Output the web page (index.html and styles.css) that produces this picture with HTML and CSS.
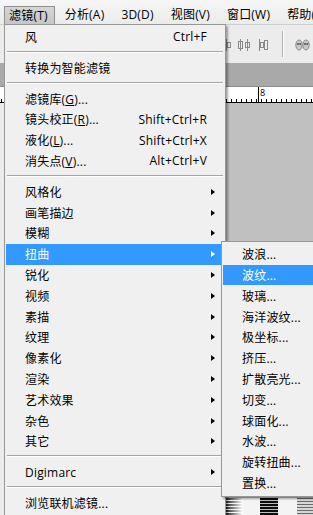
FILE: index.html
```html
<!DOCTYPE html>
<html lang="zh-CN">
<head>
<meta charset="utf-8">
<title>滤镜</title>
<link rel="stylesheet" href="styles.css">
</head>
<body>
<div class="app">
  <div class="menubar">
    <div class="mb-item open">滤镜(T)</div>
    <div class="mb-item">分析(A)</div>
    <div class="mb-item">3D(D)</div>
    <div class="mb-item">视图(V)</div>
    <div class="mb-item">窗口(W)</div>
    <div class="mb-item">帮助(H)</div>
  </div>
  <div class="optbar">
    <svg class="opt-icons" width="60" height="14" viewBox="0 0 60 14">
      <g fill="none" stroke="#8a8a8a" stroke-width="1">
        <line x1="2.5" y1="1" x2="2.5" y2="13"/>
        <rect x="3.5" y="4.5" width="3" height="5"/>
        <line x1="16.5" y1="1" x2="16.5" y2="13"/>
        <rect x="14.5" y="3.5" width="4" height="7"/>
        <line x1="23.5" y1="1" x2="23.5" y2="13"/>
        <rect x="21.5" y="4.5" width="4" height="5"/>
        <line x1="35.5" y1="1" x2="35.5" y2="13"/>
        <rect x="36.5" y="4.5" width="3" height="5"/>
        <rect x="40.5" y="2.5" width="3" height="9"/>
      </g>
    </svg>
    <div class="opt-sep"></div>
    <svg class="opt-icons2" width="16" height="14" viewBox="0 0 16 14">
      <ellipse cx="4" cy="7" rx="3.2" ry="5" fill="#c8c8c8" stroke="#8a8a8a"/>
      <ellipse cx="11" cy="7" rx="3.2" ry="5" fill="#c8c8c8" stroke="#8a8a8a"/>
      <circle cx="3" cy="6" r="1" fill="#555"/>
      <circle cx="5.2" cy="6" r="1" fill="#555"/>
      <circle cx="10" cy="6" r="1" fill="#555"/>
      <circle cx="12.2" cy="6" r="1" fill="#555"/>
    </svg>
  </div>
  <div class="tabbar"></div>
  <div class="ruler"><span class="ruler-num">8</span></div>
  <div class="canvas">
    <div class="photo">
      <div class="stripes s1"></div>
      <div class="stripes s2"></div>
      <div class="stripes s3"></div>
    </div>
  </div>
</div>

<div class="menu menu-main">
  <div class="item"><span>风</span><span class="key">Ctrl+F</span></div>
  <div class="sep"></div>
  <div class="item"><span>转换为智能滤镜</span></div>
  <div class="sep"></div>
  <div class="item"><span>滤镜库(<u>G</u>)...</span></div>
  <div class="item"><span>镜头校正(<u>R</u>)...</span><span class="key">Shift+Ctrl+R</span></div>
  <div class="item"><span>液化(<u>L</u>)...</span><span class="key">Shift+Ctrl+X</span></div>
  <div class="item"><span>消失点(<u>V</u>)...</span><span class="key">Alt+Ctrl+V</span></div>
  <div class="sep"></div>
  <div class="item"><span>风格化</span><span></span><span class="arrow"></span></div>
  <div class="item"><span>画笔描边</span><span></span><span class="arrow"></span></div>
  <div class="item"><span>模糊</span><span></span><span class="arrow"></span></div>
  <div class="item hl"><span>扭曲</span><span></span><span class="arrow"></span></div>
  <div class="item"><span>锐化</span><span></span><span class="arrow"></span></div>
  <div class="item"><span>视频</span><span></span><span class="arrow"></span></div>
  <div class="item"><span>素描</span><span></span><span class="arrow"></span></div>
  <div class="item"><span>纹理</span><span></span><span class="arrow"></span></div>
  <div class="item"><span>像素化</span><span></span><span class="arrow"></span></div>
  <div class="item"><span>渲染</span><span></span><span class="arrow"></span></div>
  <div class="item"><span>艺术效果</span><span></span><span class="arrow"></span></div>
  <div class="item"><span>杂色</span><span></span><span class="arrow"></span></div>
  <div class="item"><span>其它</span><span></span><span class="arrow"></span></div>
  <div class="sep"></div>
  <div class="item"><span>Digimarc</span><span></span><span class="arrow"></span></div>
  <div class="sep"></div>
  <div class="item"><span>浏览联机滤镜...</span></div>
</div>

<div class="menu menu-sub">
  <div class="item"><span>波浪...</span></div>
  <div class="item hl"><span>波纹...</span></div>
  <div class="item"><span>玻璃...</span></div>
  <div class="item"><span>海洋波纹...</span></div>
  <div class="item"><span>极坐标...</span></div>
  <div class="item"><span>挤压...</span></div>
  <div class="item"><span>扩散亮光...</span></div>
  <div class="item"><span>切变...</span></div>
  <div class="item"><span>球面化...</span></div>
  <div class="item"><span>水波...</span></div>
  <div class="item"><span>旋转扭曲...</span></div>
  <div class="item"><span>置换...</span></div>
</div>
</body>
</html>
```

FILE: styles.css
```css
* { box-sizing: border-box; }
html, body { margin: 0; padding: 0; }
body {
  width: 313px;
  height: 515px;
  overflow: hidden;
  position: relative;
  font-family: "Open Sans", "Noto Sans CJK SC", sans-serif;
  font-size: 12px;
  letter-spacing: 0.2px;
  color: #000;
  background: #c0c0c0;
}
u { text-decoration: underline; text-underline-offset: 1px; }

.app {
  display: flex;
  flex-direction: column;
  height: 515px;
}

/* ---------- menu bar ---------- */
.menubar {
  height: 24px;
  flex: none;
  display: flex;
  align-items: flex-end;
  gap: 5px;
  padding-left: 4px;
  background: linear-gradient(#f6f6f6, #ebebeb);
  white-space: nowrap;
  overflow: hidden;
}
.mb-item {
  height: 18px;
  line-height: 17px;
  padding: 0 7px 0 5px;
}
.mb-item.open {
  background: linear-gradient(#d6d6d6, #c6c6c6);
  border: 1px solid #8f8f8f;
  border-bottom: none;
  padding: 0 6px 0 4px;
}

/* ---------- options bar ---------- */
.optbar {
  height: 39px;
  flex: none;
  display: flex;
  align-items: center;
  padding-left: 224px;
  background: #ececec;
  border-top: 1px solid #cfcfcf;
}
.opt-icons { flex: none; margin-top: 2px; }
.opt-sep {
  flex: none;
  width: 2px;
  height: 26px;
  margin-left: -2px;
  border-left: 1px solid #b4b4b4;
  border-right: 1px solid #fafafa;
}
.opt-icons2 { flex: none; margin-left: 11px; margin-top: 2px; }

/* ---------- document tab bar ---------- */
.tabbar {
  height: 24px;
  flex: none;
  background: #a9a9a9;
  border-bottom: 1px solid #8c8c8c;
}

/* ---------- ruler ---------- */
.ruler {
  height: 16px;
  flex: none;
  display: flex;
  padding-left: 258px;
  background:
    linear-gradient(#000, #000) left bottom / 100% 1px no-repeat,
    repeating-linear-gradient(to right, #000 0 1px, transparent 1px 5px) 1px bottom / 100% 4px no-repeat,
    #fff;
}
.ruler-num {
  border-left: 1px solid #000;
  padding: 1px 0 0 1px;
  font-size: 9px;
  line-height: 10px;
  letter-spacing: 0;
  color: #000;
  align-self: stretch;
}

/* ---------- canvas ---------- */
.canvas {
  flex: 1;
  display: flex;
  flex-direction: column;
  justify-content: flex-end;
  background: linear-gradient(to right, #ececec 0 4px, #c0c0c0 4px);
}
.photo {
  height: 17px;
  margin-left: 224px;
  display: flex;
  gap: 0;
  background: #f4f4f4;
}
.stripes {
  height: 100%;
  flex: none;
}
.s1 {
  width: 18px;
  margin-left: 1px;
  background:
    linear-gradient(to right, rgba(255,255,255,0) 0%, #fff 100%),
    repeating-linear-gradient(#161616 0 2px, #e8e8e8 2px 3px);
}
.s2 {
  width: 18px;
  margin-left: 17px;
  background: repeating-linear-gradient(#0c0c0c 0 2px, #bdbdbd 2px 3px);
}
.s3 {
  width: 20px;
  margin-left: 19px;
  background: repeating-linear-gradient(#6a6a6a 0 1px, #d8d8d8 1px 3px);
}

/* ---------- dropdown menus ---------- */
.menu {
  position: absolute;
  background: #f0f0f0;
  border: 1px solid #979797;
  box-shadow: 2px 2px 2px rgba(0, 0, 0, 0.35);
  white-space: nowrap;
}
.menu-main {
  left: 4px;
  top: 24px;
  width: 222px;
  height: 500px;
  padding: 1.6px 1px 0;
  z-index: 1;
}
.menu-sub {
  left: 221px;
  top: 241px;
  width: 100px;
  padding: 1.8px 1px 2.6px;
  z-index: 2;
}
.item {
  display: grid;
  grid-template-columns: 1fr auto 17px;
  align-items: center;
  height: 20.8px;
  padding-left: 19px;
}
.item.hl {
  background: #3399ff;
  color: #fff;
}
.key { text-align: right; }
.arrow {
  width: 0;
  height: 0;
  margin-left: 4px;
  border-left: 4px solid #000;
  border-top: 3.5px solid transparent;
  border-bottom: 3.5px solid transparent;
}
.hl .arrow { border-left-color: #fff; }
.sep {
  height: 10px;
  padding: 3.5px 1px 0;
}
.sep::before {
  content: "";
  display: block;
  border-top: 1px solid #a5a5a5;
  border-bottom: 1px solid #ffffff;
}
```
